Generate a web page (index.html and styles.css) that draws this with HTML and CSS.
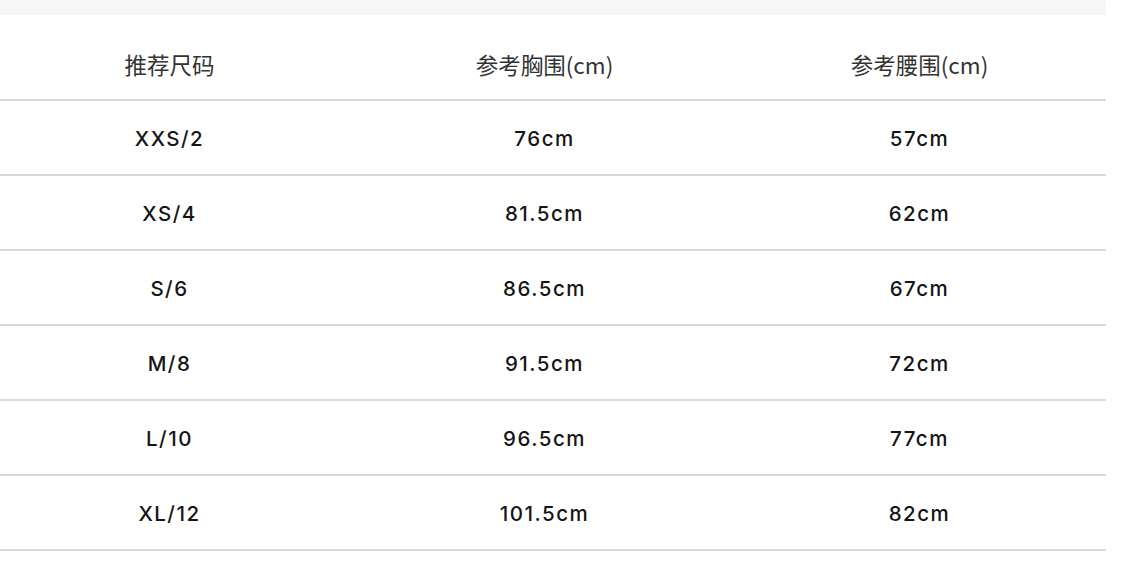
FILE: index.html
```html
<!DOCTYPE html>
<html lang="zh">
<head>
<meta charset="utf-8">
<link rel="stylesheet" href="styles.css">
</head>
<body>
<div class="page">
  <div class="band"></div>
  <div class="wrap">
    <div class="table">
      <div class="row head">
        <div class="cell">推荐尺码</div>
        <div class="cell">参考胸围(cm)</div>
        <div class="cell">参考腰围(cm)</div>
      </div>
      <div class="row"><div class="cell">XXS/2</div><div class="cell">76cm</div><div class="cell">57cm</div></div>
      <div class="row"><div class="cell">XS/4</div><div class="cell">81.5cm</div><div class="cell">62cm</div></div>
      <div class="row"><div class="cell">S/6</div><div class="cell">86.5cm</div><div class="cell">67cm</div></div>
      <div class="row"><div class="cell">M/8</div><div class="cell">91.5cm</div><div class="cell">72cm</div></div>
      <div class="row"><div class="cell">L/10</div><div class="cell">96.5cm</div><div class="cell">77cm</div></div>
      <div class="row"><div class="cell">XL/12</div><div class="cell">101.5cm</div><div class="cell">82cm</div></div>
    </div>
  </div>
</div>
</body>
</html>
```
FILE: styles.css
```css
html, body {
  margin: 0;
  padding: 0;
  background: #ffffff;
}
.page {
  width: 1106px;
}
.band {
  height: 15px;
  background: #f6f6f6;
}
.wrap {
  width: 1106px;
  overflow: hidden;
}
.table {
  width: 1125px;
  margin-left: -18px;
}
.row {
  display: grid;
  grid-template-columns: 375px 375px 375px;
  height: 73px;
  align-items: center;
  border-bottom: 2px solid #dadada;
  font-family: Inter, "Noto Sans CJK SC", sans-serif;
  font-size: 20.5px;
  font-weight: 500;
  letter-spacing: 1.5px;
  color: #151515;
}
.row .cell {
  padding-top: 3px;
}
.row.head {
  height: 84px;
  align-items: start;
  font-family: "Noto Sans CJK SC", sans-serif;
  font-size: 22.5px;
  font-weight: 400;
  letter-spacing: 0;
  color: #333333;
}
.head .cell {
  padding-top: 34px;
}
.cell {
  text-align: center;
  line-height: 30px;
}
```
